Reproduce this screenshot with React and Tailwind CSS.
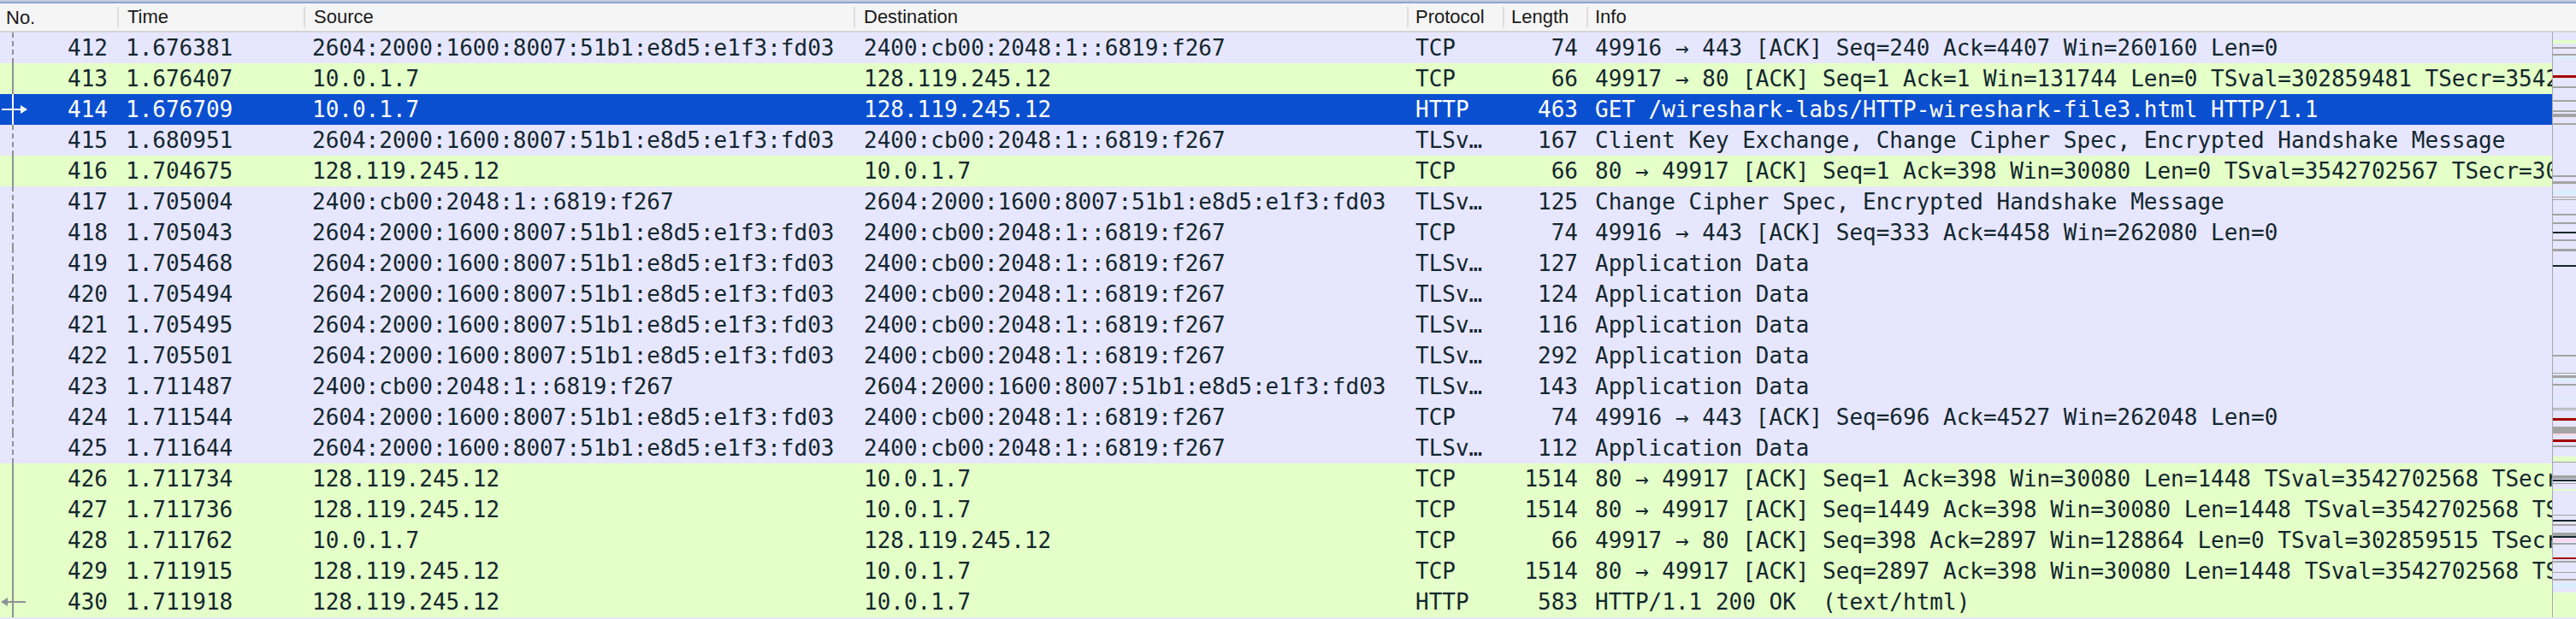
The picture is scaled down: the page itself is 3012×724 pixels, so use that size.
import React from 'react';

const packets = [
    { no: 412, time: '1.676381', src: '2604:2000:1600:8007:51b1:e8d5:e1f3:fd03', dst: '2400:cb00:2048:1::6819:f267', proto: 'TCP', len: 74, info: '49916 → 443 [ACK] Seq=240 Ack=4407 Win=260160 Len=0', kind: 'tcp' },
    { no: 413, time: '1.676407', src: '10.0.1.7', dst: '128.119.245.12', proto: 'TCP', len: 66, info: '49917 → 80 [ACK] Seq=1 Ack=1 Win=131744 Len=0 TSval=302859481 TSecr=3542702567', kind: 'http' },
    { no: 414, time: '1.676709', src: '10.0.1.7', dst: '128.119.245.12', proto: 'HTTP', len: 463, info: 'GET /wireshark-labs/HTTP-wireshark-file3.html HTTP/1.1', kind: 'selected', mark: 'request' },
    { no: 415, time: '1.680951', src: '2604:2000:1600:8007:51b1:e8d5:e1f3:fd03', dst: '2400:cb00:2048:1::6819:f267', proto: 'TLSv…', len: 167, info: 'Client Key Exchange, Change Cipher Spec, Encrypted Handshake Message', kind: 'tcp' },
    { no: 416, time: '1.704675', src: '128.119.245.12', dst: '10.0.1.7', proto: 'TCP', len: 66, info: '80 → 49917 [ACK] Seq=1 Ack=398 Win=30080 Len=0 TSval=3542702567 TSecr=302859481', kind: 'http' },
    { no: 417, time: '1.705004', src: '2400:cb00:2048:1::6819:f267', dst: '2604:2000:1600:8007:51b1:e8d5:e1f3:fd03', proto: 'TLSv…', len: 125, info: 'Change Cipher Spec, Encrypted Handshake Message', kind: 'tcp' },
    { no: 418, time: '1.705043', src: '2604:2000:1600:8007:51b1:e8d5:e1f3:fd03', dst: '2400:cb00:2048:1::6819:f267', proto: 'TCP', len: 74, info: '49916 → 443 [ACK] Seq=333 Ack=4458 Win=262080 Len=0', kind: 'tcp' },
    { no: 419, time: '1.705468', src: '2604:2000:1600:8007:51b1:e8d5:e1f3:fd03', dst: '2400:cb00:2048:1::6819:f267', proto: 'TLSv…', len: 127, info: 'Application Data', kind: 'tcp' },
    { no: 420, time: '1.705494', src: '2604:2000:1600:8007:51b1:e8d5:e1f3:fd03', dst: '2400:cb00:2048:1::6819:f267', proto: 'TLSv…', len: 124, info: 'Application Data', kind: 'tcp' },
    { no: 421, time: '1.705495', src: '2604:2000:1600:8007:51b1:e8d5:e1f3:fd03', dst: '2400:cb00:2048:1::6819:f267', proto: 'TLSv…', len: 116, info: 'Application Data', kind: 'tcp' },
    { no: 422, time: '1.705501', src: '2604:2000:1600:8007:51b1:e8d5:e1f3:fd03', dst: '2400:cb00:2048:1::6819:f267', proto: 'TLSv…', len: 292, info: 'Application Data', kind: 'tcp' },
    { no: 423, time: '1.711487', src: '2400:cb00:2048:1::6819:f267', dst: '2604:2000:1600:8007:51b1:e8d5:e1f3:fd03', proto: 'TLSv…', len: 143, info: 'Application Data', kind: 'tcp' },
    { no: 424, time: '1.711544', src: '2604:2000:1600:8007:51b1:e8d5:e1f3:fd03', dst: '2400:cb00:2048:1::6819:f267', proto: 'TCP', len: 74, info: '49916 → 443 [ACK] Seq=696 Ack=4527 Win=262048 Len=0', kind: 'tcp' },
    { no: 425, time: '1.711644', src: '2604:2000:1600:8007:51b1:e8d5:e1f3:fd03', dst: '2400:cb00:2048:1::6819:f267', proto: 'TLSv…', len: 112, info: 'Application Data', kind: 'tcp' },
    { no: 426, time: '1.711734', src: '128.119.245.12', dst: '10.0.1.7', proto: 'TCP', len: 1514, info: '80 → 49917 [ACK] Seq=1 Ack=398 Win=30080 Len=1448 TSval=3542702568 TSecr=302859481', kind: 'http' },
    { no: 427, time: '1.711736', src: '128.119.245.12', dst: '10.0.1.7', proto: 'TCP', len: 1514, info: '80 → 49917 [ACK] Seq=1449 Ack=398 Win=30080 Len=1448 TSval=3542702568 TSecr=302859481', kind: 'http' },
    { no: 428, time: '1.711762', src: '10.0.1.7', dst: '128.119.245.12', proto: 'TCP', len: 66, info: '49917 → 80 [ACK] Seq=398 Ack=2897 Win=128864 Len=0 TSval=302859515 TSecr=3542702568', kind: 'http' },
    { no: 429, time: '1.711915', src: '128.119.245.12', dst: '10.0.1.7', proto: 'TCP', len: 1514, info: '80 → 49917 [ACK] Seq=2897 Ack=398 Win=30080 Len=1448 TSval=3542702568 TSecr=302859481', kind: 'http' },
    { no: 430, time: '1.711918', src: '128.119.245.12', dst: '10.0.1.7', proto: 'HTTP', len: 583, info: 'HTTP/1.1 200 OK  (text/html)', kind: 'http', mark: 'response' },
];

// minimap marks: [y, height, color] in px from top of the list
const GRAY = '#a3a3a3';
const RED = '#a40000';
const NAVY = '#12272e';
const minimap = [
    [9, 4, '#e4ffc7'], [17, 2, GRAY], [25, 2, GRAY], [28, 3, '#daeeff'], [50, 3, RED], [63, 2, GRAY],
    [79, 2, GRAY], [91, 2, GRAY], [95, 4, GRAY], [106, 2, GRAY], [167, 2, GRAY], [174, 3, GRAY],
    [184, 6, '#daeeff'], [192, 1, GRAY], [195, 1, GRAY], [212, 2, GRAY], [222, 2, GRAY], [233, 2, NAVY],
    [242, 2, GRAY], [253, 3, GRAY], [272, 2, NAVY], [377, 2, GRAY], [398, 1, GRAY], [401, 3, GRAY],
    [405, 3, '#daeeff'], [411, 2, GRAY], [427, 2, '#daeeff'], [439, 1, GRAY], [441, 1, GRAY],
    [451, 3, RED], [461, 8, GRAY], [469, 2, '#ffd9e6'], [476, 3, RED], [483, 2, GRAY], [496, 6, '#e4ffc7'],
    [502, 1, GRAY], [518, 4, GRAY], [523, 2, NAVY], [527, 1, GRAY], [534, 2, '#e4ffc7'], [564, 1, GRAY],
    [570, 2, NAVY], [575, 2, GRAY], [585, 4, GRAY], [589, 2, NAVY], [592, 3, '#ffd9e6'], [597, 2, GRAY],
    [614, 2, RED], [618, 2, GRAY], [631, 1, GRAY], [639, 2, GRAY], [644, 6, '#daeeff'], [655, 29, '#e4ffc7'],
];

const rowBg = {
    tcp: 'bg-[#e7e6ff] text-[#12272e]',
    http: 'bg-[#e4ffc7] text-[#12272e]',
    selected: 'bg-[#0b4fd1] text-white',
};

const RelatedMark = ({ p }) => {
    const inConv = p.kind !== 'tcp';
    const color = p.kind === 'selected' ? '#ffffff' : '#8e9196';
    return (
        <svg width="40" height="36" className="shrink-0">
            <line x1="15" y1="0" x2="15" y2="36" stroke={color} strokeWidth="2" strokeDasharray={inConv ? undefined : '6 4'} />
            {p.mark === 'request' && (
                <g stroke={color} strokeWidth="2" fill={color}>
                    <line x1="2" y1="18" x2="26" y2="18" />
                    <path d="M24 13 L32 18 L24 23 Z" strokeWidth="0" />
                </g>
            )}
            {p.mark === 'response' && (
                <g stroke={color} strokeWidth="2" fill={color}>
                    <line x1="8" y1="18" x2="30" y2="18" />
                    <path d="M9 13 L1 18 L9 23 Z" strokeWidth="0" />
                </g>
            )}
        </svg>
    );
};

const Header = () => (
    <div className="flex h-[34px] items-center bg-[#f5f5f5] border-b-2 border-[#d4d4d4] text-[22px] text-[#1a1a1a]" style={{ fontFamily: '"Liberation Sans", Arial, sans-serif' }}>
        <div className="w-[137px] shrink-0 pl-[7px]">No.</div>
        <div className="w-[218px] shrink-0 pl-[10px] border-l-2 border-[#dedede] leading-[24px]">Time</div>
        <div className="w-[643px] shrink-0 pl-[10px] border-l-2 border-[#dedede] leading-[24px]">Source</div>
        <div className="w-[647px] shrink-0 pl-[10px] border-l-2 border-[#dedede] leading-[24px]">Destination</div>
        <div className="w-[112px] shrink-0 pl-[8px] border-l-2 border-[#dedede] leading-[24px]">Protocol</div>
        <div className="w-[98px] shrink-0 pl-[8px] border-l-2 border-[#dedede] leading-[24px]">Length</div>
        <div className="flex-1 pl-[8px] border-l-2 border-[#dedede] leading-[24px]">Info</div>
    </div>
);

const Row = ({ p }) => (
    <div className={`flex h-[36px] items-center whitespace-pre ${rowBg[p.kind]}`}>
        <div className="w-[137px] shrink-0 flex items-center">
            <RelatedMark p={p} />
            <span className="flex-1 text-right pr-[11px]">{p.no}</span>
        </div>
        <div className="w-[218px] shrink-0 pl-[10px]">{p.time}</div>
        <div className="w-[643px] shrink-0 pl-[10px] overflow-hidden">{p.src}</div>
        <div className="w-[647px] shrink-0 pl-[12px] overflow-hidden">{p.dst}</div>
        <div className="w-[112px] shrink-0 pl-[10px] overflow-hidden">{p.proto}</div>
        <div className="w-[98px] shrink-0 pr-[10px] text-right">{p.len}</div>
        <div className="flex-1 min-w-0 pl-[10px] overflow-hidden">{p.info}</div>
    </div>
);

const App = () => {
    return (
        <div className="w-[3012px] h-[724px] overflow-hidden bg-[#e7e6ff]">
            <div className="h-[2px] bg-[#c3cddd]" />
            <div className="h-[2px] bg-[#8ea5cc]" />
            <Header />
            <div className="flex">
                <div className="flex-1 min-w-0 text-[26px] leading-[36px]" style={{ fontFamily: '"DejaVu Sans Mono", monospace' }}>
                    {packets.map((p) => <Row key={p.no} p={p} />)}
                </div>
                <div className="w-[28px] shrink-0 border-l border-[#a8a8a8] bg-[#e7e6ff]">
                    <svg width="27" height="684">
                        {minimap.map(([y, h, c], i) => (
                            <rect key={i} x="0" y={y} width="27" height={h} fill={c} />
                        ))}
                    </svg>
                </div>
            </div>
        </div>
    );
};

export default App;
